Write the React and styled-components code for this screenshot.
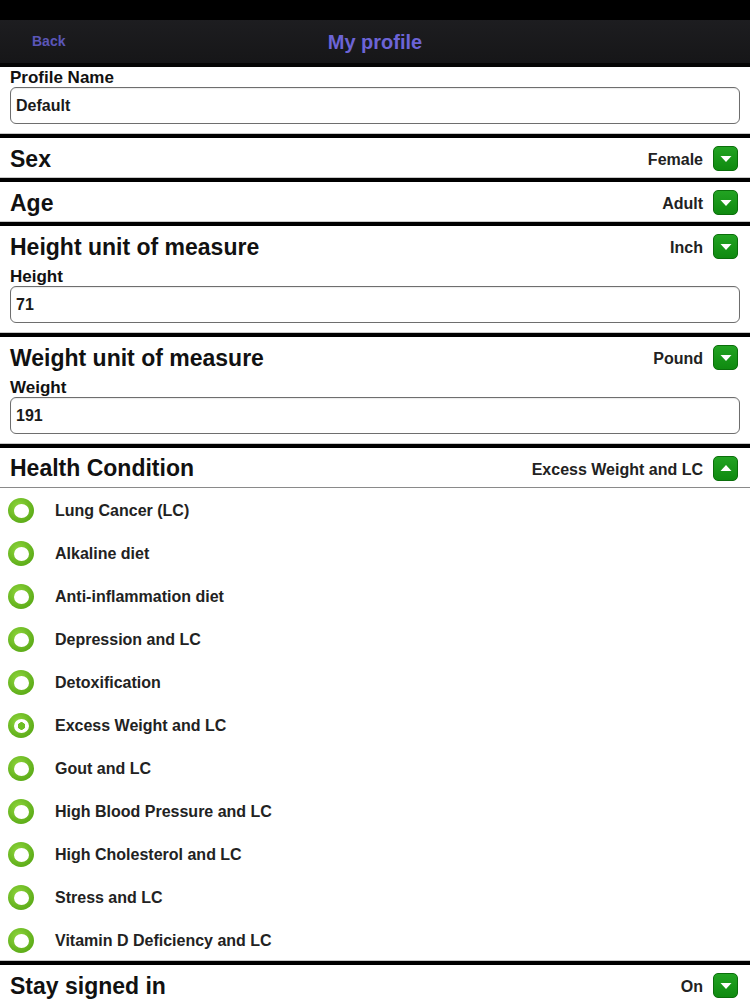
import React from "react";
import styled, { createGlobalStyle } from "styled-components";

const GlobalStyle = createGlobalStyle`
  html, body {
    margin: 0;
    padding: 0;
    background: #ffffff;
    font-family: "Liberation Sans", Arial, sans-serif;
    color: #111;
  }
  * { box-sizing: border-box; }
`;

const Page = styled.div`
  width: 750px;
  display: flex;
  flex-direction: column;
`;

const StatusBar = styled.div`
  height: 20px;
  background: #000;
`;

const NavBar = styled.div`
  height: 47px;
  background: linear-gradient(#1d1d20, #161618);
  border-bottom: 4px solid #050505;
  display: grid;
  grid-template-columns: 1fr auto 1fr;
  align-items: center;
  padding: 1px 0 0 32px;
`;

const BackButton = styled.span`
  font-size: 14px;
  font-weight: 700;
  color: #5b56b8;
  margin-top: -2px;
`;

const NavTitle = styled.span`
  font-size: 20px;
  font-weight: 700;
  color: #6c64d6;
  transform: translateX(-16px);
`;

const Section = styled.section`
  display: flex;
  flex-direction: column;
  padding: ${(p) => (p.$field ? "0 10px 10px" : "0")};
  border-top: ${(p) => (p.$first ? "none" : "4px solid #000")};
  box-shadow: ${(p) => (p.$first ? "none" : "0 -1px 0 #c8c8c8")};
`;

const FieldLabel = styled.div`
  font-size: 17px;
  font-weight: 700;
  line-height: 20px;
  height: 20px;
  padding-top: 1px;
  color: #111;
`;

const Input = styled.div`
  height: 37px;
  border: 1px solid #6e6e6e;
  border-radius: 6px;
  display: flex;
  align-items: center;
  padding: 1px 5px 0;
  font-size: 16px;
  font-weight: 700;
  color: #1a1a1a;
  box-shadow: inset 0 1px 1px rgba(0,0,0,0.08);
`;

const HeaderRow = styled.div`
  height: 40px;
  display: flex;
  align-items: center;
  justify-content: space-between;
  padding: ${(p) => (p.$inField ? "2px 2px 0 0" : "2px 12px 0 10px")};
  border-bottom: ${(p) => (p.$underline ? "1px solid #8a8a8a" : "none")};
`;

const RowTitle = styled.div`
  font-size: 23px;
  font-weight: 700;
  color: #111;
`;

const ValueGroup = styled.div`
  display: flex;
  align-items: center;
  gap: 10px;
  margin-top: -1px;
`;

const Value = styled.span`
  font-size: 16px;
  font-weight: 700;
  color: #222;
  padding-top: 3px;
`;

const GreenButton = styled.span`
  width: 25px;
  height: 25px;
  border-radius: 5px;
  background: linear-gradient(#22a322, #0f8a10);
  border: 1px solid #0b6e0b;
  display: flex;
  align-items: center;
  justify-content: center;
`;

const RadioList = styled.div`
  display: flex;
  flex-direction: column;
`;

const RadioItem = styled.div`
  height: 43px;
  display: flex;
  align-items: center;
  padding: 3px 0 0 8px;
  gap: 21px;
`;

const RadioCircle = styled.span`
  width: 26px;
  height: 25px;
  border-radius: 50%;
  background: radial-gradient(circle at 40% 35%, #8fd63c, #5fae1a 70%);
  display: flex;
  align-items: center;
  justify-content: center;
  flex-shrink: 0;
  margin-top: -1px;
  &::after {
    content: "";
    width: 15px;
    height: 14px;
    border-radius: 50%;
    background: ${(p) =>
      p.$checked
        ? "radial-gradient(circle, #6ebf24 0 3.5px, #ffffff 4px)"
        : "#ffffff"};
  }
`;

const RadioLabel = styled.span`
  font-size: 16px;
  font-weight: 700;
  color: #222;
`;

const Arrow = ({ up }) => (
  <svg width="14" height="10" viewBox="0 0 14 10">
    {up ? (
      <polygon points="1.5,8 12.5,8 7,2" fill="#fff" />
    ) : (
      <polygon points="1.5,2 12.5,2 7,8" fill="#fff" />
    )}
  </svg>
);

const SelectRow = ({ title, value, up, underline }) => (
  <HeaderRow $underline={underline}>
    <RowTitle>{title}</RowTitle>
    <ValueGroup>
      <Value>{value}</Value>
      <GreenButton>
        <Arrow up={up} />
      </GreenButton>
    </ValueGroup>
  </HeaderRow>
);

const conditions = [
  "Lung Cancer (LC)",
  "Alkaline diet",
  "Anti-inflammation diet",
  "Depression and LC",
  "Detoxification",
  "Excess Weight and LC",
  "Gout and LC",
  "High Blood Pressure and LC",
  "High Cholesterol and LC",
  "Stress and LC",
  "Vitamin D Deficiency and LC",
];

export default function App() {
  return (
    <Page>
      <GlobalStyle />
      <StatusBar />
      <NavBar>
        <BackButton>Back</BackButton>
        <NavTitle>My profile</NavTitle>
        <span />
      </NavBar>

      <Section $first $field>
        <FieldLabel>Profile Name</FieldLabel>
        <Input>Default</Input>
      </Section>

      <Section>
        <SelectRow title="Sex" value="Female" />
      </Section>

      <Section>
        <SelectRow title="Age" value="Adult" />
      </Section>

      <Section $field>
        <HeaderRow $inField>
          <RowTitle>Height unit of measure</RowTitle>
          <ValueGroup>
            <Value>Inch</Value>
            <GreenButton>
              <Arrow />
            </GreenButton>
          </ValueGroup>
        </HeaderRow>
        <FieldLabel>Height</FieldLabel>
        <Input>71</Input>
      </Section>

      <Section $field>
        <HeaderRow $inField>
          <RowTitle>Weight unit of measure</RowTitle>
          <ValueGroup>
            <Value>Pound</Value>
            <GreenButton>
              <Arrow />
            </GreenButton>
          </ValueGroup>
        </HeaderRow>
        <FieldLabel>Weight</FieldLabel>
        <Input>191</Input>
      </Section>

      <Section>
        <SelectRow title="Health Condition" value="Excess Weight and LC" up underline />
        <RadioList>
          {conditions.map((c) => (
            <RadioItem key={c}>
              <RadioCircle $checked={c === "Excess Weight and LC"} />
              <RadioLabel>{c}</RadioLabel>
            </RadioItem>
          ))}
        </RadioList>
      </Section>

      <Section>
        <SelectRow title="Stay signed in" value="On" />
      </Section>
    </Page>
  );
}
